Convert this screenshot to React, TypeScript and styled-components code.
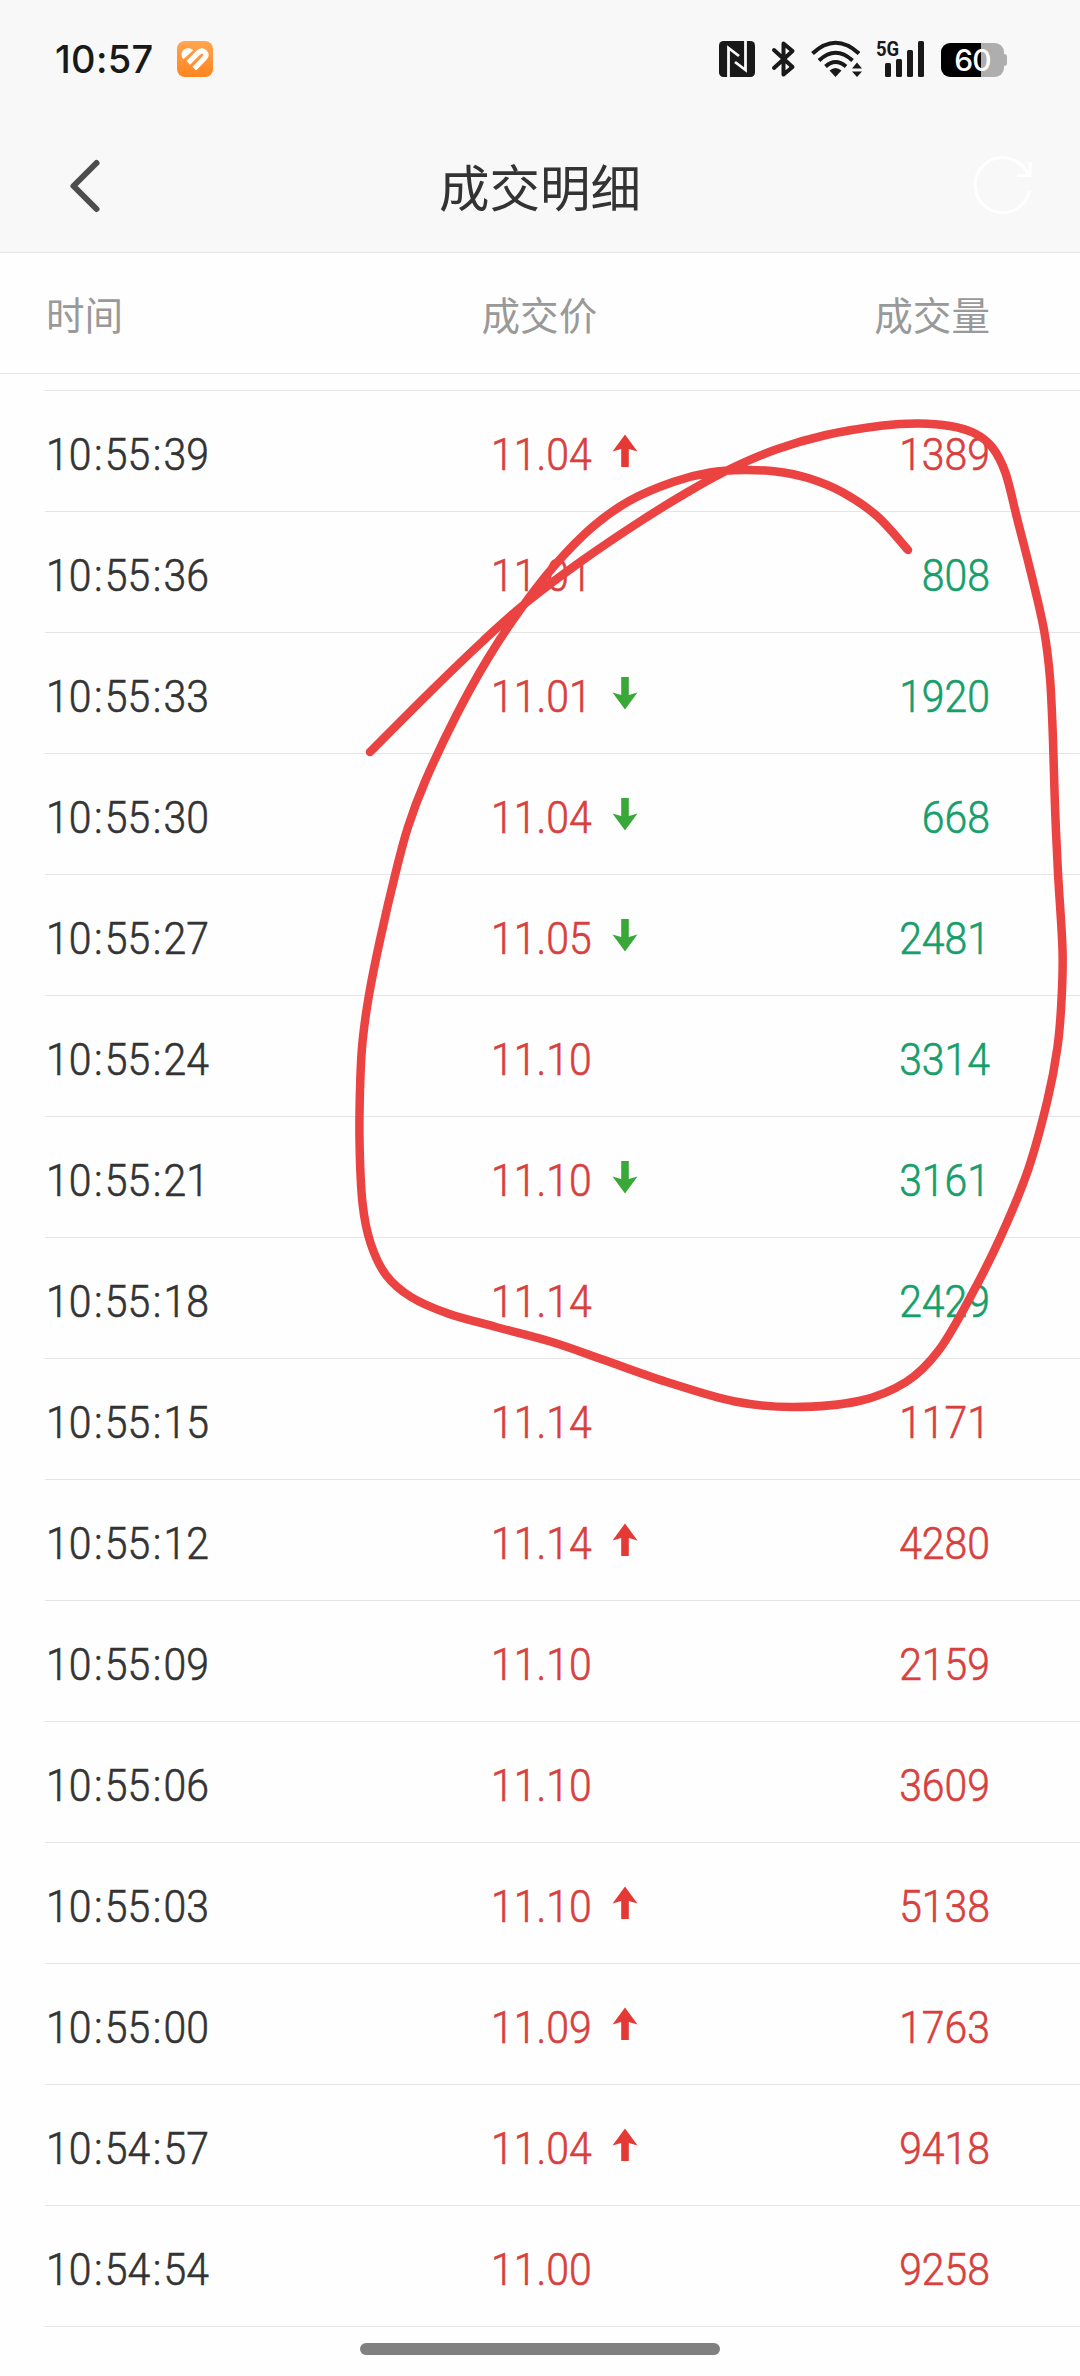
import React from "react";
import styled, { createGlobalStyle } from "styled-components";

const GlobalStyle = createGlobalStyle`
  * { box-sizing: border-box; }
  body { margin: 0; background: #fefefe; }
`;

const Screen = styled.div`
  position: relative;
  width: 1080px;
  height: 2376px;
  overflow: hidden;
  display: flex;
  flex-direction: column;
  background: #fefefe;
  font-family: Roboto, "Noto Sans CJK SC", sans-serif;
  color: #333;
`;

const TopArea = styled.header`
  height: 253px;
  background: #f8f8f8;
  border-bottom: 1px solid #e5e5e5;
`;

const StatusBar = styled.div`
  height: 120px;
  display: flex;
  align-items: center;
  padding: 0 73px 2px 55px;
`;

const Clock = styled.span`
  width: 122px;
  font: 500 38px/46px Inter, sans-serif;
  letter-spacing: 0.3px;
  color: #191919;
`;

const StatusIcons = styled.div`
  margin-left: auto;
  display: flex;
  align-items: center;
`;

const SignalBox = styled.div`
  position: relative;
  width: 48px;
  height: 36px;
  margin: 0 17px 0 14px;
`;

const NetLabel = styled.span`
  position: absolute;
  left: 0;
  top: -2px;
  font: 700 21px/20px Roboto, sans-serif;
  transform: scaleX(0.88);
  transform-origin: left;
  color: #191919;
`;

const Battery = styled.div`
  width: 63px;
  height: 34px;
  margin-top: 2px;
  border-radius: 9px;
  background: linear-gradient(to right, #000 40px, #aeaeae 40px);
  color: #fff;
  font: 500 30px/35px Inter, sans-serif;
  letter-spacing: -1px;
  text-align: center;
`;

const BatteryTip = styled.div`
  width: 3px;
  height: 12px;
  margin-top: 2px;
  border-radius: 0 4px 4px 0;
  background: #aeaeae;
`;

const NavBar = styled.div`
  height: 132px;
  display: grid;
  grid-template-columns: 300px 1fr 300px;
  align-items: center;
`;

const NavSide = styled.div<{ $end?: boolean }>`
  display: flex;
  justify-content: ${(p) => (p.$end ? "flex-end" : "flex-start")};
  padding: ${(p) => (p.$end ? "0 46px 0 0" : "0 0 0 68px")};
`;

const Title = styled.h1`
  margin: 0;
  padding-top: 7px;
  text-align: center;
  font-size: 50.5px;
  font-weight: 400;
  line-height: 60px;
  white-space: nowrap;
`;

const Columns = styled.div`
  display: grid;
  grid-template-columns: 434px 1fr 300px;
  align-items: center;
`;

const ColumnHeads = styled(Columns)`
  height: 121px;
  padding: 0 90px 1px 46px;
  border-bottom: 1px solid #e5e5e5;
  font-size: 38.6px;
  font-weight: 400;
  color: #999;
`;

const Head = styled.span<{ $end?: boolean; $inset?: boolean }>`
  padding-left: ${(p) => (p.$inset ? "1.5px" : "0")};
  text-align: ${(p) => (p.$end ? "right" : "left")};
`;

const List = styled.main`
  margin: 16px 0 0 45px;
  border-top: 1px solid #e5e5e5;
`;

const Row = styled(Columns)`
  height: 121px;
  padding: 8px 90px 0 1px;
  border-bottom: 1px solid #e5e5e5;
`;

const PriceCell = styled.div`
  display: flex;
  align-items: center;
  padding-left: 11px;
`;

const Figure = styled.span<{ $color: string; $end?: boolean }>`
  display: block;
  font-size: 45px;
  line-height: 54px;
  font-weight: 300;
  -webkit-text-stroke: 0.6px ${(p) => p.$color};
  color: ${(p) => p.$color};
  text-align: ${(p) => (p.$end ? "right" : "left")};
  transform: scaleX(0.91);
  transform-origin: ${(p) => (p.$end ? "right" : "left")};
`;

const Colon = styled.span`
  padding: 0 2.4px 0 2.8px;
`;

const PriceBox = styled.div`
  width: 121px;
`;

const HomeBar = styled.div`
  width: 360px;
  height: 12px;
  margin: 16px auto 0;
  border-radius: 6px;
  background: #808080;
`;

const Overlay = styled.svg`
  position: absolute;
  inset: 0;
  pointer-events: none;
`;

const RED = "#d8403d";
const GREEN = "#169e6b";

type Trade = [time: string, price: string, move: "up" | "down" | "", volume: string, side: "buy" | "sell"];

const trades: Trade[] = [
  ["10:55:39", "11.04", "up", "1389", "buy"],
  ["10:55:36", "11.01", "", "808", "sell"],
  ["10:55:33", "11.01", "down", "1920", "sell"],
  ["10:55:30", "11.04", "down", "668", "sell"],
  ["10:55:27", "11.05", "down", "2481", "sell"],
  ["10:55:24", "11.10", "", "3314", "sell"],
  ["10:55:21", "11.10", "down", "3161", "sell"],
  ["10:55:18", "11.14", "", "2429", "sell"],
  ["10:55:15", "11.14", "", "1171", "buy"],
  ["10:55:12", "11.14", "up", "4280", "buy"],
  ["10:55:09", "11.10", "", "2159", "buy"],
  ["10:55:06", "11.10", "", "3609", "buy"],
  ["10:55:03", "11.10", "up", "5138", "buy"],
  ["10:55:00", "11.09", "up", "1763", "buy"],
  ["10:54:57", "11.04", "up", "9418", "buy"],
  ["10:54:54", "11.00", "", "9258", "buy"],
];

function Time({ value }: { value: string }) {
  const [h, m, s] = value.split(":");
  return (
    <Figure $color="#333">
      {h}
      <Colon>:</Colon>
      {m}
      <Colon>:</Colon>
      {s}
    </Figure>
  );
}

const ArrowSvg = styled.svg<{ $down: boolean }>`
  margin-top: -9px;
  transform: ${(p) => (p.$down ? "rotate(180deg)" : "none")};
`;

function MoveArrow({ dir }: { dir: "up" | "down" }) {
  return (
    <ArrowSvg $down={dir === "down"} width="26" height="34" viewBox="0 0 26 34">
      <path d="M13 0.5L25.5 17.5L16.8 15V33H9.2V15L0.5 17.5Z" fill={dir === "up" ? "#e53935" : "#3aa838"} />
    </ArrowSvg>
  );
}

const stroke: [number, number][] = [
  [370, 752], [430, 692], [483, 641], [527, 602], [583, 560], [640, 521.5], [687, 492.5], [729, 469.5], [776, 449.5],
  [826, 435], [883, 425.5], [919, 423.5], [950, 426], [974, 433], [992, 447], [1005.5, 473],
  [1017.5, 520], [1032, 577], [1044, 630], [1050, 678], [1053, 740], [1055, 807], [1058, 873],
  [1062.5, 950], [1061.5, 1000], [1057.5, 1047], [1047.5, 1100], [1028, 1170], [1001, 1236], [972, 1294],
  [939, 1350], [906, 1382], [859, 1401], [793, 1407], [735, 1401.5], [670, 1383], [604, 1360], [552, 1342],
  [496, 1327], [448, 1313.5], [411, 1297], [386, 1275], [370.5, 1243], [362.5, 1203], [359.5, 1140],
  [360.3, 1080], [362.7, 1040], [369, 995], [380, 940], [395.3, 874], [408, 827], [425.7, 780],
  [456, 716], [487, 660], [520, 610], [555, 565], [593, 526.5], [630, 500.5], [673, 482], [710, 472.5], [744, 470],
  [776, 471.5], [808, 478], [842, 492], [877, 516], [908, 550],
];

function smooth(points: [number, number][]) {
  let d = `M${points[0][0]} ${points[0][1]}`;
  for (let i = 0; i < points.length - 1; i++) {
    const a = points[Math.max(i - 1, 0)];
    const b = points[i];
    const c = points[i + 1];
    const e = points[Math.min(i + 2, points.length - 1)];
    d += `C${b[0] + (c[0] - a[0]) / 6} ${b[1] + (c[1] - a[1]) / 6} ${c[0] - (e[0] - b[0]) / 6} ${c[1] - (e[1] - b[1]) / 6} ${c[0]} ${c[1]}`;
  }
  return d;
}

const HealthIcon = () => (
  <svg width="36" height="36" viewBox="0 0 36 36">
    <defs>
      <linearGradient id="health" x1="0" y1="0" x2="0" y2="1">
        <stop offset="0" stopColor="#ffa550" />
        <stop offset="1" stopColor="#ff8420" />
      </linearGradient>
    </defs>
    <rect width="36" height="36" rx="8" fill="url(#health)" />
    <path d="M6.3 18.2C3.2 14.6 4.4 9 9 7.6C12 6.7 14.6 7.6 16.2 9.2Z" fill="#fff" />
    <path d="M11.3 21.9L21.6 11.5Q25 8.4 27.8 11.3Q30.3 14 27.6 16.9L17.3 27.6" fill="none" stroke="#fff" strokeWidth="5.2" />
  </svg>
);

export default function App() {
  return (
    <Screen>
      <GlobalStyle />
      <TopArea>
        <StatusBar>
          <Clock>10:57</Clock>
          <HealthIcon />
          <StatusIcons>
            <svg width="36" height="36" viewBox="0 0 36 36">
              <rect width="36" height="36" rx="4.5" fill="#191919" />
              <path d="M9.5 36V7L20 15M26.5 0V29L16 21" fill="none" stroke="#f8f8f8" strokeWidth="2.8" />
            </svg>
            <svg width="56" height="38" viewBox="0 0 56 38">
              <path d="M19 10L37.5 27L28.5 34.5V3.5L37.5 11L19 28" fill="none" stroke="#191919" strokeWidth="4" strokeLinejoin="round" strokeLinecap="round" />
            </svg>
            <svg width="51" height="38" viewBox="0 0 51 38">
              <g fill="none" stroke="#191919" strokeWidth="4">
                <path d="M1.5 13.5Q24.5 -8 48 13.5" />
                <path d="M8 20.5Q24.5 5 41.5 20.5" />
                <path d="M14.5 26.5Q24.5 17.5 35 26.5" />
              </g>
              <path d="M18.5 30.5Q24.5 25.5 30.5 30.5L24.5 37Z" fill="#191919" />
              <path d="M41 28.5L46 22.5L51 28.5ZM41 31.5L46 37L51 31.5Z" fill="#191919" />
            </svg>
            <SignalBox>
              <NetLabel>5G</NetLabel>
              <svg width="48" height="36" viewBox="0 0 48 36" fill="#191919">
                <rect x="9" y="22" width="6" height="14" rx="1.5" />
                <rect x="20" y="18" width="6" height="18" rx="1.5" />
                <rect x="31" y="9" width="6" height="27" rx="1.5" />
                <rect x="42" y="0" width="6" height="36" rx="1.5" />
              </svg>
            </SignalBox>
            <Battery>60</Battery>
            <BatteryTip />
          </StatusIcons>
        </StatusBar>
        <NavBar>
          <NavSide>
            <svg width="36" height="56" viewBox="0 0 36 56">
              <path d="M28.5 5L5.5 28L28.5 51" fill="none" stroke="#4d4d4d" strokeWidth="6" strokeLinecap="round" strokeLinejoin="round" />
            </svg>
          </NavSide>
          <Title>成交明细</Title>
          <NavSide $end>
            <svg width="64" height="60" viewBox="0 0 64 60">
              <path d="M59.5 35A27.5 27.5 0 1 1 58 18.5" fill="none" stroke="#fff" strokeWidth="3" />
              <path d="M60 6V19.5H47.5" fill="none" stroke="#fff" strokeWidth="3" />
            </svg>
          </NavSide>
        </NavBar>
      </TopArea>
      <ColumnHeads>
        <Head>时间</Head>
        <Head $inset>成交价</Head>
        <Head $end>成交量</Head>
      </ColumnHeads>
      <List>
        {trades.map(([time, price, move, volume, side]) => (
          <Row key={time}>
            <Time value={time} />
            <PriceCell>
              <PriceBox>
                <Figure $color={RED}>{price}</Figure>
              </PriceBox>
              {move && <MoveArrow dir={move} />}
            </PriceCell>
            <Figure $end $color={side === "buy" ? RED : GREEN}>
              {volume}
            </Figure>
          </Row>
        ))}
      </List>
      <HomeBar />
      <Overlay width="1080" height="2376" viewBox="0 0 1080 2376">
        <path d={smooth(stroke)} fill="none" stroke="#eb4242" strokeWidth="8.5" strokeLinecap="round" strokeLinejoin="round" />
      </Overlay>
    </Screen>
  );
}
